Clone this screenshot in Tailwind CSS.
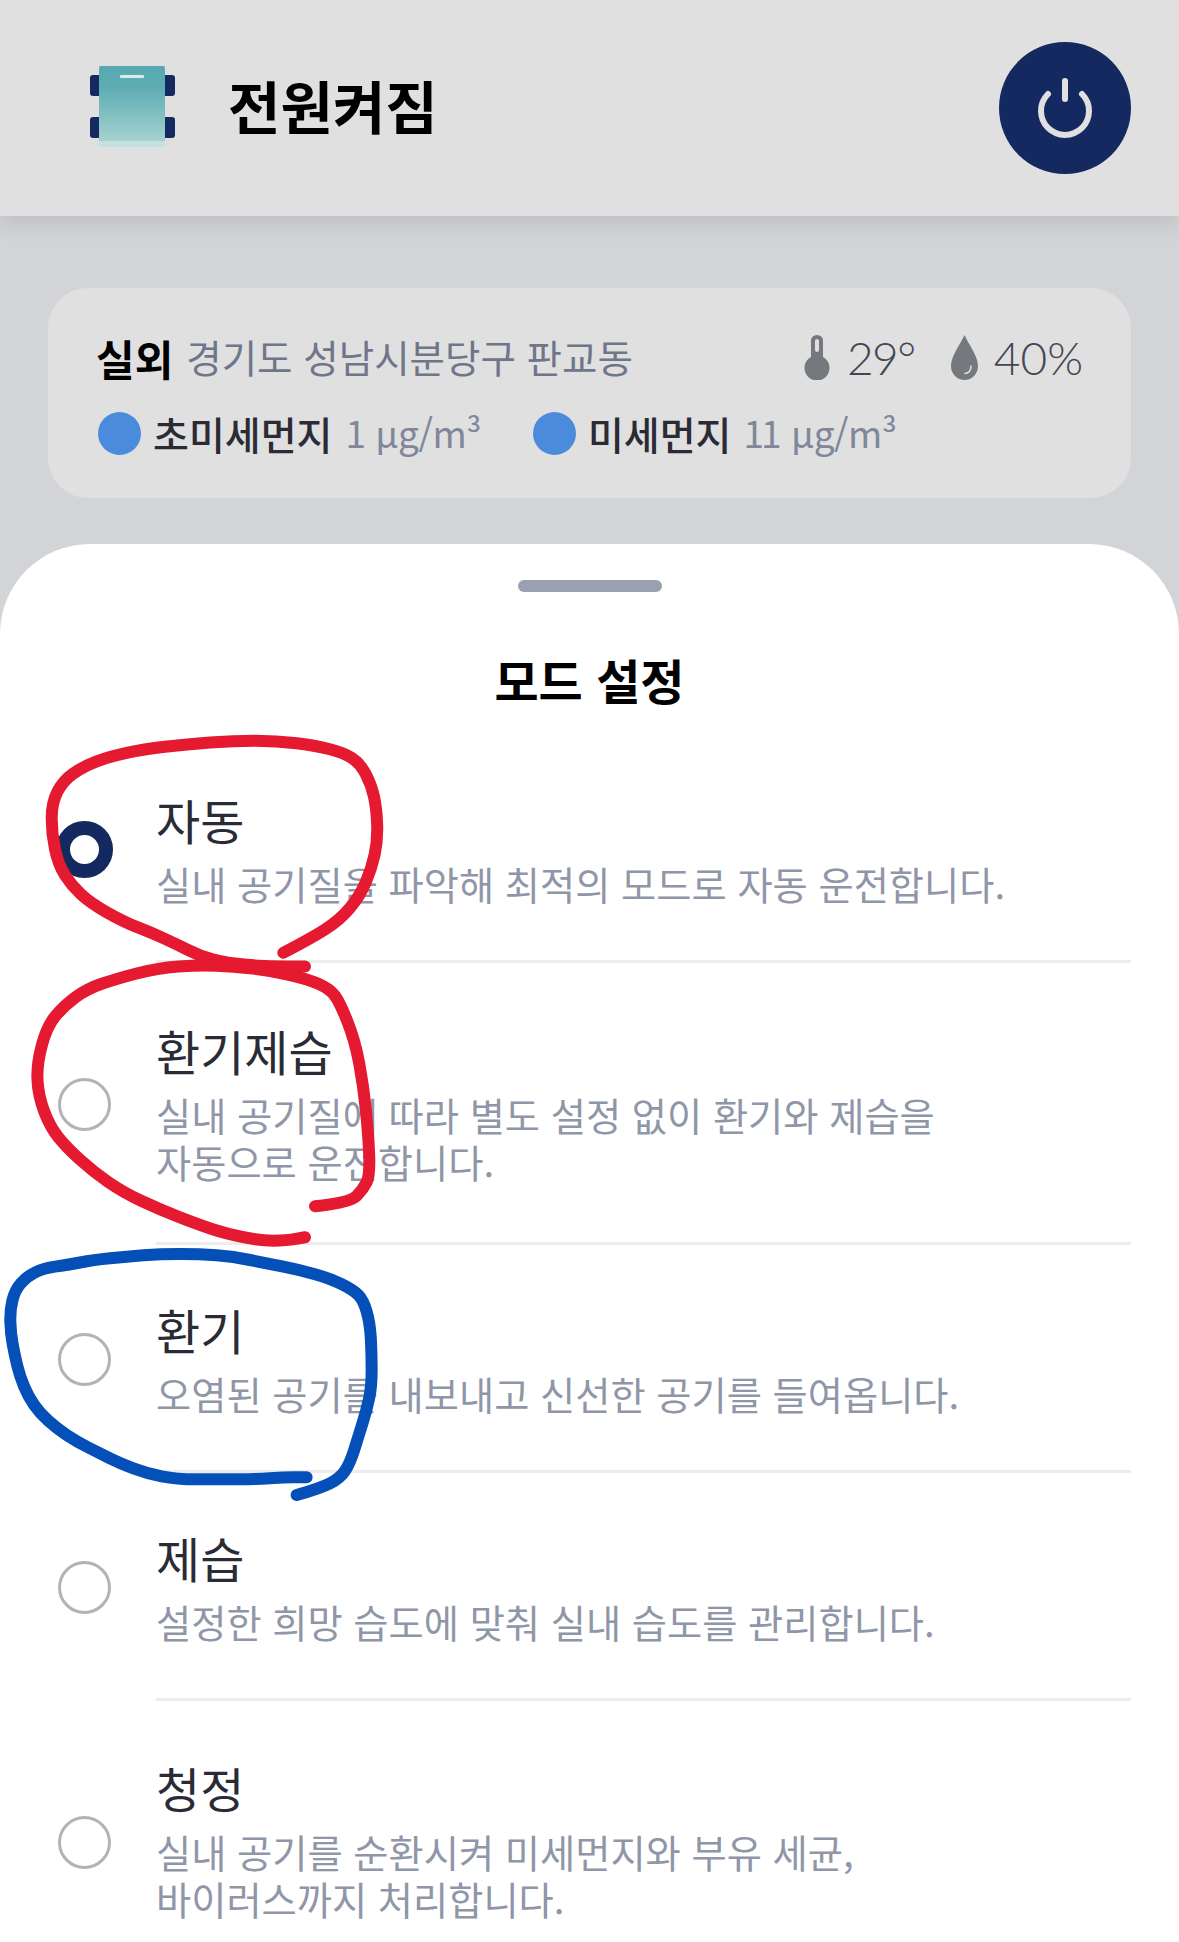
<!DOCTYPE html>
<html lang="ko">
<head>
    <meta charset="UTF-8" />
    <meta name="viewport" content="width=device-width, initial-scale=1.0">
    <title>모드 설정</title>
    <script src="https://cdn.jsdelivr.net/npm/@tailwindcss/browser@4"></script>
</head>
<body class="bg-[#d3d4d7]">
<div class="relative w-[1179px] h-[1942px] overflow-hidden font-['Noto_Sans_CJK_KR','Noto_Sans',sans-serif]">

    <!-- Header -->
    <header class="relative flex items-center justify-between h-[216px] pl-[90px] pr-[48px] bg-[#e0e0e0] shadow-[0_6px_24px_rgba(0,0,0,0.12)]">
        <div class="flex items-center">
            <svg class="mb-[4px]" width="85" height="81" viewBox="0 0 85 81">
                <defs>
                    <linearGradient id="body" x1="0" y1="0" x2="0" y2="1">
                        <stop offset="0" stop-color="#57a9b2"/>
                        <stop offset="0.3" stop-color="#5fadb3"/>
                        <stop offset="1" stop-color="#a6d2cf"/>
                    </linearGradient>
                </defs>
                <rect x="0" y="9" width="20" height="21" rx="3" fill="#14295f"/>
                <rect x="0" y="51" width="20" height="21" rx="3" fill="#14295f"/>
                <rect x="65" y="9" width="20" height="21" rx="3" fill="#14295f"/>
                <rect x="65" y="51" width="20" height="21" rx="3" fill="#14295f"/>
                <rect x="9" y="0" width="66" height="81" rx="2" fill="#c3e1e0"/>
                <path d="M11 0h62a2 2 0 0 1 2 2v73H9V2a2 2 0 0 1 2-2z" fill="url(#body)"/>
                <rect x="30" y="9" width="24" height="3" rx="1" fill="#d8ecec"/>
            </svg>
            <h1 class="ml-[53px] mb-[8px] text-[57px] font-bold leading-none text-black">전원켜짐</h1>
        </div>
        <button class="flex items-center justify-center w-[132px] h-[132px] rounded-full bg-[#14295f]">
            <svg width="132" height="132" viewBox="0 0 132 132" fill="none" stroke="#e0e0e0" stroke-width="6" stroke-linecap="round">
                <path d="M49 52A24 24 0 1 0 83 52"/>
                <path d="M66 39V57"/>
            </svg>
        </button>
    </header>

    <!-- Outdoor info -->
    <section class="mx-[48px] mt-[72px] h-[210px] rounded-[40px] bg-[#e0e0e0] pl-[48px] pr-[48px] pt-[40px]">
        <div class="flex items-center justify-between h-[58px]">
            <div class="flex items-center">
                <span class="text-[42px] font-bold text-black">실외</span>
                <span class="ml-[13px] text-[38.500px] text-[#6f7689]">경기도 성남시분당구 판교동</span>
            </div>
            <div class="flex items-center font-['Lato',sans-serif] text-[46px] font-light text-[#434754]">
                <svg width="26" height="45" viewBox="0 0 26 45">
                    <path d="M7 5.500a6 5.500 0 0 1 12 0V22a12.500 12.500 0 1 1-12 0z" fill="#75787c"/>
                    <rect x="11" y="4" width="4" height="13" rx="2" fill="#e0e0e0"/>
                </svg>
                <span class="ml-[17px] tracking-[-1.5px]">29°</span>
                <svg class="ml-[36px]" width="27" height="45" viewBox="0 0 27 45">
                    <path d="M13.500 0C9 10 0 21 0 31a13.500 14 0 0 0 27 0C27 21 18 10 13.500 0z" fill="#75787c"/>
                    <path d="M20 31c0 4-2 7-6 7.500" fill="none" stroke="#e0e0e0" stroke-width="1.500" stroke-linecap="round"/>
                </svg>
                <span class="ml-[16px]">40%</span>
            </div>
        </div>
        <div class="flex items-center h-[58px] mt-[18px] text-[39px]">
            <span class="w-[43px] h-[43px] ml-[2px] rounded-full bg-[#4a8bdc]"></span>
            <span class="ml-[12px] font-medium text-[#2a2b35]">초미세먼지</span>
            <span class="ml-[13px] text-[37px] tracking-[-0.5px] text-[#7f8799]">1 µg/m³</span>
            <span class="ml-[52px] w-[43px] h-[43px] rounded-full bg-[#4a8bdc]"></span>
            <span class="ml-[12px] font-medium text-[#2a2b35]">미세먼지</span>
            <span class="ml-[12px] text-[37px] tracking-[-0.5px] text-[#7f8799]"><span class="tracking-[-3px]">1</span>1 µg/m³</span>
        </div>
    </section>

    <!-- Mode sheet -->
    <section class="mt-[46px] rounded-t-[90px] bg-white pt-[36px] h-[1398px]">
        <div class="mx-auto w-[144px] h-3 rounded-full bg-[#9aa0b0]"></div>
        <h2 class="mt-[57px] mb-[26px] h-[60px] text-center text-[48px] leading-[60px] font-bold text-black">모드 설정</h2>

        <ul class="pl-[56px] pr-[48px]">
            <li class="flex items-center">
                <span class="flex justify-center w-[56px] shrink-0">
                    <span class="block w-[57px] h-[57px] shrink-0 rounded-full border-[14px] border-[#14295f] bg-white"></span>
                </span>
                <div class="flex flex-col justify-center flex-1 ml-[44px] h-[228px] border-b-[3px] border-[#ececec]">
                    <p class="text-[48px] leading-[60px] text-[#2a2b35]">자동</p>
                    <p class="mt-[11px] text-[38.250px] leading-[47px] text-[#8f96a8]">실내 공기질을 파악해 최적의 모드로 자동 운전합니다.</p>
                </div>
            </li>
            <li class="flex items-center">
                <span class="flex justify-center w-[56px] shrink-0">
                    <span class="block w-[53px] h-[53px] rounded-full border-[3px] border-[#b2b2b8]"></span>
                </span>
                <div class="flex flex-col justify-center flex-1 ml-[44px] h-[282px] border-b-[3px] border-[#ececec]">
                    <p class="text-[48px] leading-[60px] text-[#2a2b35]">환기제습</p>
                    <p class="mt-[11px] text-[38.250px] leading-[47px] text-[#8f96a8]">실내 공기질에 따라 별도 설정 없이 환기와 제습을<br>자동으로 운전합니다.</p>
                </div>
            </li>
            <li class="flex items-center">
                <span class="flex justify-center w-[56px] shrink-0">
                    <span class="block w-[53px] h-[53px] rounded-full border-[3px] border-[#b2b2b8]"></span>
                </span>
                <div class="flex flex-col justify-center flex-1 ml-[44px] h-[228px] border-b-[3px] border-[#ececec]">
                    <p class="text-[48px] leading-[60px] text-[#2a2b35]">환기</p>
                    <p class="mt-[11px] text-[38.250px] leading-[47px] text-[#8f96a8]">오염된 공기를 내보내고 신선한 공기를 들여옵니다.</p>
                </div>
            </li>
            <li class="flex items-center">
                <span class="flex justify-center w-[56px] shrink-0">
                    <span class="block w-[53px] h-[53px] rounded-full border-[3px] border-[#b2b2b8]"></span>
                </span>
                <div class="flex flex-col justify-center flex-1 ml-[44px] h-[228px] border-b-[3px] border-[#ececec]">
                    <p class="text-[48px] leading-[60px] text-[#2a2b35]">제습</p>
                    <p class="mt-[11px] text-[38.250px] leading-[47px] text-[#8f96a8]">설정한 희망 습도에 맞춰 실내 습도를 관리합니다.</p>
                </div>
            </li>
            <li class="flex items-center">
                <span class="flex justify-center w-[56px] shrink-0">
                    <span class="block w-[53px] h-[53px] rounded-full border-[3px] border-[#b2b2b8]"></span>
                </span>
                <div class="flex flex-col justify-center flex-1 ml-[44px] h-[282px] pb-[5px]">
                    <p class="text-[48px] leading-[60px] text-[#2a2b35]">청정</p>
                    <p class="mt-[11px] text-[38.250px] leading-[47px] text-[#8f96a8]">실내 공기를 순환시켜 미세먼지와 부유 세균,<br>바이러스까지 처리합니다.</p>
                </div>
            </li>
        </ul>
    </section>

    <!-- Hand-drawn marks on top of the screenshot -->
    <svg class="absolute inset-0 pointer-events-none" width="1179" height="1942" viewBox="0 0 1179 1942" fill="none" stroke-linecap="round" stroke-linejoin="round" stroke-width="12">
        <path id="mark-red-1" stroke="#e5192f"/>
        <path id="mark-red-2" stroke="#e5192f"/>
        <path id="mark-blue" stroke="#0450b8"/>
    </svg>
</div>

<script>
    // points are read off the zoomed crops: [x, y] in crop pixels
    const red1 = [[850,675],[930,635],[1020,580],[1080,510],[1115,430],[1133,350],[1130,260],[1115,190],[1080,125],[1030,95],[950,75],[830,60],[700,60],[560,70],[430,85],[330,105],[250,135],[190,175],[155,240],[155,330],[175,420],[215,480],[270,530],[370,585],[450,615],[530,650],[600,685],[680,705],[800,715],[915,715]];
    const red2 = [[945,1410],[1050,1400],[1090,1360],[1110,1320],[1105,1200],[1090,1060],[1065,930],[1020,820],[990,780],[920,750],[800,725],[700,715],[600,710],[470,720],[350,750],[260,780],[190,830],[140,890],[110,1000],[115,1090],[150,1180],[200,1240],[280,1310],[370,1370],[480,1420],[600,1465],[680,1490],[780,1510],[860,1510],[915,1500]];
    const blue = [[890,765],[960,745],[1020,715],[1050,670],[1075,590],[1100,510],[1115,440],[1115,340],[1110,250],[1090,180],[1060,150],[990,115],[900,90],[800,70],[700,50],[600,42],[480,42],[380,50],[280,60],[200,75],[130,85],[80,110],[45,150],[30,210],[32,280],[45,350],[60,410],[85,470],[120,520],[170,565],[230,605],[300,640],[360,670],[440,700],[530,718],[650,718],[770,718],[850,712],[920,712]];

    function smooth(points, top, sy) {
        const p = points.map(([x, y]) => [x / 3, top + y / sy]);
        let d = `M${p[0][0]} ${p[0][1]}`;
        for (let i = 1; i < p.length - 1; i++) {
            const mx = (p[i][0] + p[i + 1][0]) / 2;
            const my = (p[i][1] + p[i + 1][1]) / 2;
            d += `Q${p[i][0]} ${p[i][1]} ${mx} ${my}`;
        }
        const last = p[p.length - 1];
        return d + `L${last[0]} ${last[1]}`;
    }

    document.getElementById("mark-red-1").setAttribute("d", smooth(red1, 720, 2.9));
    document.getElementById("mark-red-2").setAttribute("d", smooth(red2, 720, 2.9));
    document.getElementById("mark-blue").setAttribute("d", smooth(blue, 1240, 3));
</script>
</body>
</html>
